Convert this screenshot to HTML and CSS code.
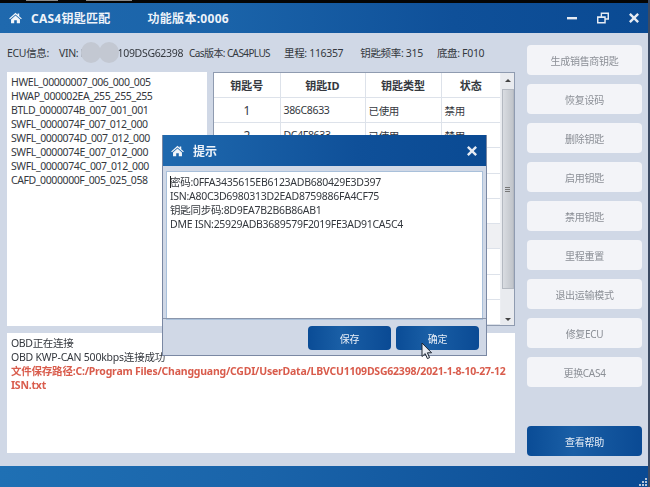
FILE: index.html
```html
<!DOCTYPE html>
<html lang="zh">
<head>
<meta charset="utf-8">
<title>CAS4钥匙匹配</title>
<link rel="stylesheet" href="styles.css">
</head>
<body>
<div class="app">
  <div class="strip"><span class="frag frag-a"></span><span class="frag frag-b"></span></div>
  <header class="titlebar">
    <svg class="home" viewBox="0 0 16 14"><path d="M8 0.6 L10.6 2.9 V1.4 H12.6 V4.7 L15.8 7.5 L14.8 8.6 L8 2.7 L1.2 8.6 L0.2 7.5 Z M8 4 L13.5 8.7 V13.6 H9.6 V9.8 H6.4 V13.6 H2.5 V8.7 Z"/></svg>
    <span class="app-title">CAS4钥匙匹配</span>
    <span class="app-version">功能版本:0006</span>
    <span class="win-controls">
      <svg class="ctl" width="10" height="12" viewBox="0 0 10 12"><rect x="0" y="5" width="10" height="2.4"/></svg>
      <svg class="ctl" width="12" height="12" viewBox="0 0 13 12"><path fill-rule="evenodd" d="M4 0H13V8H9.5V12H0V4H4Z M5.5 1.8V4H9.5V6.4H11.4V1.8Z M1.6 6V10.2H7.9V6Z"/></svg>
      <svg class="ctl" width="10" height="10" viewBox="0 0 10 10"><path d="M1.7 0 L5 3.3 L8.3 0 L10 1.7 L6.7 5 L10 8.3 L8.3 10 L5 6.7 L1.7 10 L0 8.3 L3.3 5 L0 1.7 Z"/></svg>
    </span>
  </header>
  <main class="workspace">
    <section class="content">
      <div class="info">
        <span class="i-ecu">ECU信息:</span>
        <span class="i-vin">VIN: <span class="vin-val">LBVCU1109DSG62398<i class="blob blob-a"></i><i class="blob blob-b"></i></span></span>
        <span class="i-cas">Cas版本: CAS4PLUS</span>
        <span class="i-mile">里程: 116357</span>
        <span class="i-freq">钥匙频率: 315</span>
        <span class="i-chassis">底盘: F010</span>
      </div>
      <div class="panels">
        <ul class="ecu-list">
          <li>HWEL_00000007_006_000_005</li>
          <li>HWAP_000002EA_255_255_255</li>
          <li>BTLD_0000074B_007_001_001</li>
          <li>SWFL_0000074F_007_012_000</li>
          <li>SWFL_0000074D_007_012_000</li>
          <li>SWFL_0000074E_007_012_000</li>
          <li>SWFL_0000074C_007_012_000</li>
          <li>CAFD_0000000F_005_025_058</li>
        </ul>
        <div class="table-box">
          <table class="keys">
            <colgroup><col class="c1"><col class="c2"><col class="c3"><col class="c4"></colgroup>
            <thead><tr><th>钥匙号</th><th>钥匙ID</th><th>钥匙类型</th><th>状态</th></tr></thead>
            <tbody>
              <tr><td class="num">1</td><td>386C8633</td><td>已使用</td><td>禁用</td></tr>
              <tr><td class="num">2</td><td>DC4F8633</td><td>已使用</td><td>禁用</td></tr>
              <tr><td></td><td></td><td></td><td></td></tr>
              <tr><td></td><td></td><td></td><td></td></tr>
              <tr><td></td><td></td><td></td><td></td></tr>
              <tr class="selected"><td></td><td></td><td></td><td></td></tr>
              <tr><td></td><td></td><td></td><td></td></tr>
              <tr><td></td><td></td><td></td><td></td></tr>
              <tr><td></td><td></td><td></td><td></td></tr>
            </tbody>
          </table>
          <div class="scrollbar">
            <span class="arrow up"></span>
            <span class="thumb"><i></i></span>
            <span class="arrow down"></span>
          </div>
        </div>
      </div>
      <div class="log">
        <p>OBD正在连接</p>
        <p class="kwp">OBD KWP-CAN 500kbps连接成功</p>
        <p class="path">文件保存路径:C:/Program Files/Changguang/CGDI/UserData/LBVCU1109DSG62398/2021-1-8-10-27-12<br>ISN.txt</p>
      </div>
    </section>
    <aside class="actions">
      <button class="btn">生成销售商钥匙</button>
      <button class="btn">恢复设码</button>
      <button class="btn">删除钥匙</button>
      <button class="btn">启用钥匙</button>
      <button class="btn">禁用钥匙</button>
      <button class="btn">里程重置</button>
      <button class="btn">退出运输模式</button>
      <button class="btn">修复ECU</button>
      <button class="btn">更换CAS4</button>
      <button class="btn primary help">查看帮助</button>
    </aside>
  </main>
  <footer class="statusbar">
    <svg class="grip" width="9" height="9" viewBox="0 0 9 9"><rect x="7" y="1" width="2" height="2"/><rect x="7" y="4" width="2" height="2"/><rect x="4" y="4" width="2" height="2"/><rect x="7" y="7" width="2" height="2"/><rect x="4" y="7" width="2" height="2"/><rect x="1" y="7" width="2" height="2"/></svg>
  </footer>

  <div class="dialog">
    <div class="dlg-head">
      <svg class="home small" viewBox="0 0 16 14"><path d="M8 0.6 L10.6 2.9 V1.4 H12.6 V4.7 L15.8 7.5 L14.8 8.6 L8 2.7 L1.2 8.6 L0.2 7.5 Z M8 4 L13.5 8.7 V13.6 H9.6 V9.8 H6.4 V13.6 H2.5 V8.7 Z"/></svg>
      <span class="dlg-title">提示</span>
      <svg class="dlg-close" width="10" height="10" viewBox="0 0 10 10"><path d="M1.7 0 L5 3.3 L8.3 0 L10 1.7 L6.7 5 L10 8.3 L8.3 10 L5 6.7 L1.7 10 L0 8.3 L3.3 5 L0 1.7 Z"/></svg>
    </div>
    <div class="dlg-text">
      <p><span class="caret"></span>密码:0FFA3435615EB6123ADB680429E3D397</p>
      <p>ISN:A80C3D6980313D2EAD8759886FA4CF75</p>
      <p>钥匙同步码:8D9EA7B2B6B86AB1</p>
      <p>DME ISN:25929ADB3689579F2019FE3AD91CA5C4</p>
    </div>
    <div class="dlg-foot">
      <button class="btn primary dlg-btn">保存</button>
      <button class="btn primary dlg-btn">确定</button>
    </div>
  </div>
  <svg class="cursor" width="12" height="18" viewBox="0 0 12 18"><path d="M1 1 V14.5 L4.2 11.6 L6.4 16.6 L8.6 15.6 L6.4 10.8 H10.6 Z" fill="#e8ecf2" stroke="#1c2430" stroke-width="1"/></svg>
</div>
</body>
</html>
```

FILE: styles.css
```css
* { box-sizing: border-box; }
html, body { margin: 0; padding: 0; background: #000; }
body {
  font-family: "Noto Sans", "Noto Sans CJK SC", sans-serif;
  font-size: 10.5px;
  letter-spacing: -0.33px;
  color: #34383e;
}
p { margin: 0; }
.app {
  position: relative;
  width: 650px;
  height: 487px;
  display: flex;
  flex-direction: column;
  overflow: hidden;
  filter: blur(0.4px);
  border-right: 2px solid #3b4a63;
}
.strip {
  height: 3px;
  background: #050505;
  display: flex;
  gap: 18px;
  padding-left: 26px;
  flex: none;
}
.frag { height: 1px; background: #8a8a8a; }
.frag-a { width: 32px; }
.frag-b { width: 46px; margin-left: 10px; }
.titlebar {
  height: 30px;
  flex: none;
  display: flex;
  align-items: center;
  padding-left: 9px;
  background: linear-gradient(90deg, #1f69ae 0%, #1a63a9 35%, #0f5099 70%, #0a4a93 100%);
  color: #eef3f9;
}
.home { width: 13px; height: 12px; fill: #f2f5f9; flex: none; }
.app-title { margin-left: 9px; font-size: 12px; font-weight: 700; letter-spacing: 0.25px; }
.app-version { margin-left: 37px; font-size: 12px; font-weight: 700; letter-spacing: 0.3px; }
.win-controls {
  margin-left: auto;
  display: flex;
  align-items: center;
  gap: 20px;
  padding-right: 9px;
}
.ctl { fill: #e6ebf3; }
.workspace {
  flex: 1;
  display: flex;
  background: #d0d8e6;
  padding: 0 6px 13px 7px;
  gap: 12px;
  min-height: 0;
}
.content { width: 508px; display: flex; flex-direction: column; }
.info {
  height: 39px;
  flex: none;
  display: flex;
  align-items: center;
  white-space: nowrap;
}
.i-vin { margin-left: 10px; }
.vin-val { position: relative; }
.blob {
  position: absolute;
  top: -4px;
  width: 20px;
  height: 21px;
  border-radius: 50%;
  background: #c3c8d2;
}
.blob-a { left: 0; }
.blob-b { left: 18px; }
.i-cas { margin-left: 6px; font-size: 10px; letter-spacing: -0.6px; }
.i-mile { margin-left: 14px; }
.i-freq { margin-left: 17px; }
.i-chassis { margin-left: 14px; }
.panels { height: 254px; flex: none; display: flex; gap: 6px; }
.ecu-list {
  width: 200px;
  margin: 0;
  padding: 3px 4px;
  list-style: none;
  background: #fff;
  line-height: 14px;
  letter-spacing: -0.4px;
}
.table-box {
  flex: 1;
  display: flex;
  background: #fff;
  border: 1px solid #8f9bb0;
  overflow: hidden;
}
.keys {
  width: 286px;
  height: 252px;
  table-layout: fixed;
  border-collapse: collapse;
  flex: none;
}
.c1 { width: 66px; }
.c2 { width: 85px; }
.c3 { width: 76px; }
.c4 { width: 59px; }
.keys th, .keys td {
  height: 24.4px;
  padding: 0 3px;
  border: 1px solid #dde2ea;
  border-top: 0;
  text-align: left;
  font-weight: 400;
}
.keys th { text-align: center; font-weight: 700; font-size: 11px; letter-spacing: 0; }
.keys th:first-child, .keys td:first-child { border-left: 0; }
.keys th:last-child, .keys td:last-child { border-right: 0; }
.keys .num { text-align: center; font-size: 12px; }
.selected td { background: #eff0f3; }
.scrollbar {
  flex: 1;
  display: flex;
  flex-direction: column;
  align-items: center;
  background: #e9ebef;
  border-left: 1px solid #eceef2;
  padding-top: 6px;
}
.arrow { width: 0; height: 0; border-left: 3px solid transparent; border-right: 3px solid transparent; }
.arrow.up { border-bottom: 3px solid #444; }
.arrow.down { border-top: 3px solid #444; margin-top: 29px; }
.thumb {
  width: 12px;
  height: 200px;
  margin-top: 7px;
  background: linear-gradient(90deg, #d9dce1, #c0c4ca);
  border: 1px solid #b4b9c1;
  display: flex;
  align-items: center;
  justify-content: center;
}
.thumb i { width: 5px; height: 5px; border-top: 1px solid #777; border-bottom: 1px solid #777; background: linear-gradient(#777, #777) center / 100% 1px no-repeat; }
.log {
  margin-top: 7px;
  height: 120px;
  flex: none;
  background: #fff;
  padding: 3px 4px;
  line-height: 14px;
  white-space: nowrap;
}
.kwp { letter-spacing: -0.22px; }
.path { color: #d95c4c; font-weight: 700; letter-spacing: -0.22px; }
.actions {
  width: 115px;
  display: flex;
  flex-direction: column;
  gap: 9px;
  padding-top: 12px;
}
.btn {
  height: 30px;
  flex: none;
  border: 0;
  border-radius: 4px;
  background: #f3f4f8;
  color: #8b8f96;
  font-family: inherit;
  font-size: 10px;
  letter-spacing: -0.3px;
  padding: 0;
}
.btn.primary {
  background: linear-gradient(90deg, #0a4c96, #1a5fa6 40%, #0a4a94);
  color: #e9eff7;
}
.help { margin-top: 30px; }
.statusbar {
  height: 21px;
  flex: none;
  background: linear-gradient(90deg, #1f70b4 0%, #1a64aa 40%, #0a4a93 100%);
  display: flex;
  justify-content: flex-end;
  align-items: flex-end;
  padding: 0 1px 1px 0;
}
.grip { fill: #b7c5d8; }
.dialog {
  position: absolute;
  left: 162px;
  top: 135px;
  width: 325px;
  height: 221px;
  background: #d0d8e6;
  border: 1px solid #7a88a3;
  border-top: 0;
  display: flex;
  flex-direction: column;
}
.dlg-head {
  height: 31px;
  flex: none;
  display: flex;
  align-items: center;
  padding: 0 9px 0 8px;
  background: linear-gradient(90deg, #1f69ae, #0f5099 60%, #0a4a93);
  color: #eef3f9;
}
.small { width: 13px; height: 12px; }
.dlg-title { margin-left: 9px; font-size: 12px; font-weight: 700; letter-spacing: 0; }
.dlg-close { margin-left: auto; fill: #e6ebf3; }
.dlg-text {
  margin: 5px 3px 0;
  height: 149px;
  flex: none;
  background: #fff;
  border: 1px solid #a9c0da;
  padding: 3px 3px;
  line-height: 14px;
  letter-spacing: -0.28px;
}
.caret { display: inline-block; width: 1px; height: 12px; background: #222; vertical-align: -2px; margin-right: -1px; }
.dlg-foot {
  flex: 1;
  margin-top: -2px;
  border-top: 1px solid #8b96ab;
  display: flex;
  justify-content: flex-end;
  gap: 5px;
  padding: 7px 7px 0 0;
}
.dlg-btn { width: 83px; height: 24px; }
.cursor { position: absolute; left: 421px; top: 342px; }
```
